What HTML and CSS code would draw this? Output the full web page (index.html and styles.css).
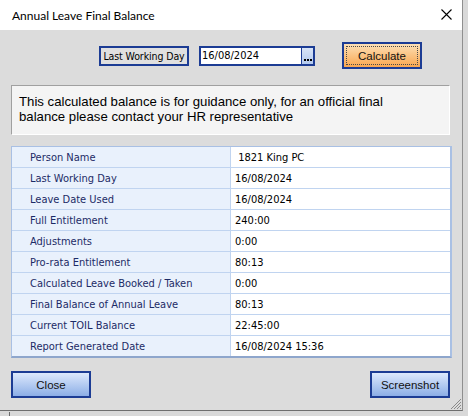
FILE: index.html
```html
<!DOCTYPE html>
<html>
<head>
<meta charset="utf-8">
<link rel="stylesheet" href="styles.css">
</head>
<body>
<div class="window">
  <div class="titlebar">
    <span class="title">Annual Leave Final Balance</span>
    <svg class="close-x" width="11" height="11" viewBox="0 0 11 11"><path d="M0.5 0.5 L10.5 10.5 M10.5 0.5 L0.5 10.5" stroke="#000" stroke-width="1.1" fill="none"/></svg>
  </div>
  <div class="content">
    <div class="toprow">
      <div class="lbl">Last Working Day</div>
      <div class="date">
        <span class="dtext">16/08/2024</span>
        <span class="dbtn"><svg width="8" height="3" viewBox="0 0 8 3"><rect x="0" y="0" width="2" height="2" fill="#000"/><rect x="3" y="0" width="2" height="2" fill="#000"/><rect x="6" y="0" width="2" height="2" fill="#000"/></svg></span>
      </div>
      <button class="btn calc"><span class="focus">Calculate</span></button>
    </div>
    <div class="info">This calculated balance is for guidance only, for an official final<br>balance please contact your HR representative</div>
    <div class="grid">
      <div class="row"><div class="k">Person Name</div><div class="v pre"> 1821 King PC</div></div>
      <div class="row"><div class="k">Last Working Day</div><div class="v">16/08/2024</div></div>
      <div class="row"><div class="k">Leave Date Used</div><div class="v">16/08/2024</div></div>
      <div class="row"><div class="k">Full Entitlement</div><div class="v">240:00</div></div>
      <div class="row"><div class="k">Adjustments</div><div class="v">0:00</div></div>
      <div class="row"><div class="k">Pro-rata Entitlement</div><div class="v">80:13</div></div>
      <div class="row"><div class="k">Calculated Leave Booked / Taken</div><div class="v">0:00</div></div>
      <div class="row"><div class="k">Final Balance of Annual Leave</div><div class="v">80:13</div></div>
      <div class="row"><div class="k">Current TOIL Balance</div><div class="v">22:45:00</div></div>
      <div class="row"><div class="k">Report Generated Date</div><div class="v">16/08/2024 15:36</div></div>
    </div>
    <div class="footer">
      <button class="btn blue">Close</button>
      <button class="btn blue">Screenshot</button>
    </div>
    <svg class="grip" width="12" height="12" viewBox="0 0 12 12"><path d="M11 1 L1 11 M11 4 L4 11 M11 7 L7 11 M11 10 L10 11" stroke="#8a8a8a" stroke-width="1" fill="none"/></svg>
  </div>
</div>
<div class="behind"></div>
</body>
</html>
```
FILE: styles.css
```css
html, body {
  margin: 0;
  padding: 0;
}
body {
  width: 468px;
  height: 416px;
  overflow: hidden;
  background: #d9d9d9;
  position: relative;
}
.window {
  width: 462px;
  border-right: 1px solid #8f8f8f;
  border-bottom: 1px solid #6e6e6e;
  background: #dcdcdc;
}
.titlebar {
  height: 30px;
  background: #ffffff;
  display: flex;
  align-items: center;
  justify-content: space-between;
  padding: 0 10px 0 12px;
}
.title {
  font-family: Lato, "Liberation Sans", sans-serif;
  font-size: 12px;
  color: #000;
  margin-top: 1px;
}
.close-x {
  display: block;
  margin-top: -1px;
}
.content {
  position: relative;
  padding: 12px 12px 12px 11px;
}
.toprow {
  display: flex;
  align-items: center;
  height: 27px;
}
.lbl {
  margin-left: 88px;
  width: 90px;
  height: 20px;
  box-sizing: border-box;
  border: 2px solid #1c3c94;
  background: #e0e0e0;
  font-family: "DejaVu Sans Condensed", "DejaVu Sans", sans-serif;
  font-stretch: condensed;
  font-size: 10.5px;
  letter-spacing: -0.1px;
  white-space: nowrap;
  overflow: hidden;
  display: flex;
  align-items: center;
  justify-content: center;
  color: #000;
}
.date {
  margin-left: 10px;
  width: 116px;
  height: 20px;
  box-sizing: border-box;
  border: 2px solid #1c3c94;
  background: #fff;
  display: flex;
}
.dtext {
  flex: 1;
  font-family: "DejaVu Sans Condensed", "DejaVu Sans", sans-serif;
  font-stretch: condensed;
  font-size: 11px;
  padding-left: 1px;
  line-height: 16px;
  color: #000;
}
.dbtn {
  width: 12px;
  border-left: 1px solid #1c3c94;
  background: linear-gradient(#d8e4f7, #b3c9ee);
  display: flex;
  align-items: flex-end;
  justify-content: center;
  padding-bottom: 2px;
  box-sizing: border-box;
}
.dbtn svg { display: block; }
.btn {
  box-sizing: border-box;
  width: 80px;
  height: 27px;
  padding: 0;
  margin: 0;
  border: 2px solid #1c3c94;
  font-family: "Liberation Sans", Arial, sans-serif;
  font-size: 11.5px;
  color: #111;
}
.calc {
  margin-left: 27px;
  background: linear-gradient(#fde0b6, #f9a64f);
  padding: 2px;
}
.focus {
  display: flex;
  align-items: center;
  justify-content: center;
  height: 100%;
  border: 1px dotted #4a4a4a;
  box-sizing: border-box;
}
.info {
  margin-top: 16px;
  height: 50px;
  box-sizing: border-box;
  background: #f4f4f4;
  border-top: 1px solid #a0a0a0;
  border-left: 1px solid #a0a0a0;
  border-right: 1px solid #ffffff;
  border-bottom: 1px solid #ffffff;
  padding: 8px 0 0 7px;
  font-family: "Liberation Sans", Arial, sans-serif;
  font-size: 13.2px;
  line-height: 15px;
  color: #000;
}
.grid {
  margin-top: 11px;
  width: 438px;
  border-top: 1px solid #a9c0e4;
  border-left: 1px solid #a9c0e4;
  border-right: 2px solid #a9c0e4;
  border-bottom: 2px solid #8ea6cc;
}
.row {
  display: flex;
  height: 21px;
  box-sizing: border-box;
  border-bottom: 1px solid #c0d4f0;
}
.row:last-child { border-bottom: none; height: 20px; }
.k {
  width: 219px;
  background: #e9f1fc;
  border-right: 1px solid #c0d4f0;
  padding-left: 18px;
  box-sizing: border-box;
  color: #1c2b66;
  font-family: "DejaVu Sans Condensed", "DejaVu Sans", sans-serif;
  font-stretch: condensed;
  font-size: 11px;
  display: flex;
  align-items: center;
}
.v {
  flex: 1;
  background: #fff;
  padding-left: 4px;
  color: #000;
  font-family: "DejaVu Sans Condensed", "DejaVu Sans", sans-serif;
  font-stretch: condensed;
  font-size: 11px;
  display: flex;
  align-items: center;
}
.pre { white-space: pre; }
.footer {
  margin-top: 13px;
  display: flex;
  justify-content: space-between;
}
.blue {
  background: linear-gradient(#dde9fd, #8caee6);
}
.grip {
  position: absolute;
  right: 0;
  bottom: 0;
  display: block;
}
.behind {
  position: absolute;
  left: 9px;
  top: 412px;
  width: 1px;
  height: 4px;
  background: #6a6a6a;
}
```
